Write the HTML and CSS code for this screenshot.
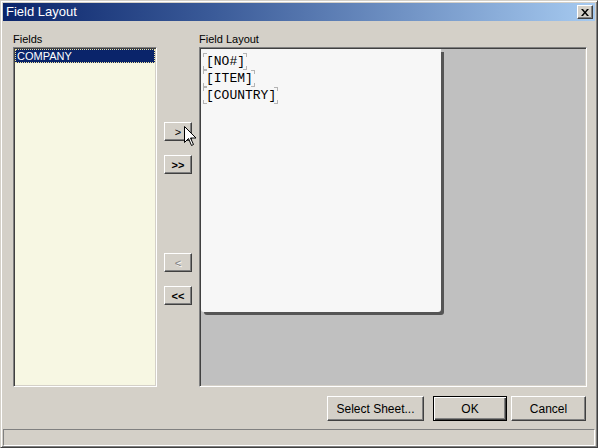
FILE: index.html
```html
<!DOCTYPE html>
<html>
<head>
<meta charset="utf-8">
<title>Field Layout</title>
<link rel="stylesheet" href="styles.css">
</head>
<body>
<div class="window">
  <div class="titlebar">
    <span class="title">Field Layout</span>
    <button class="close" aria-label="Close">
      <svg width="8" height="7" viewBox="0 0 8 7"><path d="M0 0h2l2 2.5L6 0h2L5 3.5 8 7H6L4 4.5 2 7H0l3-3.5z" fill="#000"/></svg>
    </button>
  </div>
  <div class="main">
    <div class="fields-col">
      <div class="label">Fields</div>
      <div class="listbox">
        <div class="item selected">COMPANY</div>
      </div>
    </div>
    <div class="movers">
      <button class="btn mover first">&gt;</button>
      <button class="btn mover">&gt;&gt;</button>
      <button class="btn mover gap" disabled>&lt;</button>
      <button class="btn mover">&lt;&lt;</button>
    </div>
    <div class="layout-col">
      <div class="label">Field Layout</div>
      <div class="canvas">
        <div class="card">
          <span class="field">[NO#]</span>
          <span class="field">[ITEM]</span>
          <span class="field">[COUNTRY]</span>
        </div>
      </div>
    </div>
  </div>
  <div class="actions">
    <button class="btn action select">Select Sheet...</button>
    <button class="btn action ok">OK</button>
    <button class="btn action cancel">Cancel</button>
  </div>
  <div class="status"></div>
  <svg class="cursor" width="13" height="21" viewBox="0 0 13 21">
    <path d="M0.5 0.5v16l4-4 3 7 2-1-3-6.5h5.5z" fill="#fff" stroke="#000" stroke-width="1" stroke-linejoin="miter"/>
  </svg>
</div>
</body>
</html>
```

FILE: styles.css
```css
* { box-sizing: border-box; }

html, body {
  margin: 0;
  padding: 0;
  background: #d4d0c8;
}

body {
  font-family: "Liberation Sans", Arial, sans-serif;
  font-size: 11px;
  color: #000;
}

.window {
  position: relative;
  width: 598px;
  height: 448px;
  background: #d4d0c8;
  border: 1px solid;
  border-color: #d4d0c8 #404040 #404040 #d4d0c8;
  box-shadow: inset 1px 1px 0 #fff, inset -1px -1px 0 #808080;
  padding: 2px 2px 1px 2px;
  display: flex;
  flex-direction: column;
}

.titlebar {
  height: 18px;
  flex: none;
  display: flex;
  align-items: center;
  justify-content: space-between;
  padding: 0 2px 0 3px;
  background: linear-gradient(to right, #0a246a 0%, #3a5a98 35%, #a6caf0 100%);
}

.title {
  color: #fff;
  font-size: 13px;
  line-height: 18px;
}

.close {
  width: 16px;
  height: 14px;
  padding: 0;
  margin: 0;
  display: flex;
  align-items: center;
  justify-content: center;
  background: #d4d0c8;
  border: 1px solid;
  border-color: #fff #404040 #404040 #fff;
  box-shadow: inset -1px -1px 0 #808080;
}

.main {
  display: flex;
  padding: 11px 0 0 10px;
  flex: none;
}

.label {
  height: 15px;
  line-height: 15px;
  font-size: 11px;
}

.fields-col {
  width: 144px;
  flex: none;
}

.listbox {
  height: 340px;
  background: #f7f7e3;
  border: 1px solid;
  border-color: #808080 #fff #fff #808080;
  box-shadow: inset 1px 1px 0 #404040, inset -1px -1px 0 #d4d0c8;
  padding: 1px;
}

.item {
  height: 14px;
  line-height: 12px;
  padding-left: 1px;
  white-space: nowrap;
}

.item.selected {
  background: #0a246a;
  color: #fff;
  border: 1px dotted #f2e6a0;
}

.movers {
  width: 28px;
  flex: none;
  margin: 0 7px;
  display: flex;
  flex-direction: column;
  padding-top: 90px;
}

.btn {
  font-family: "Liberation Sans", Arial, sans-serif;
  font-size: 11px;
  color: #000;
  background: #d4d0c8;
  border: 1px solid;
  border-color: #fff #404040 #404040 #fff;
  box-shadow: inset -1px -1px 0 #808080;
  padding: 0;
  margin: 0;
}

.mover {
  width: 28px;
  height: 19px;
  margin-top: 14px;
  font-weight: bold;
  font-size: 11px;
  line-height: 16px;
  padding-top: 1px;
}

.mover.first { margin-top: 0; font-weight: normal; }
.mover.gap { margin-top: 79px; }

.mover:disabled {
  color: #808080;
  text-shadow: 1px 1px 0 #fff;
  font-weight: normal;
}

.layout-col {
  width: 388px;
  flex: none;
}

.canvas {
  height: 340px;
  background: #c0c0c0;
  border: 1px solid;
  border-color: #808080 #fff #fff #808080;
  box-shadow: inset 1px 1px 0 #404040, inset -1px -1px 0 #d4d0c8;
  padding: 1px;
}

.card {
  width: 240px;
  height: 263px;
  background: #f7f7f7;
  border-radius: 0 0 3px 3px;
  box-shadow: 3px 3px 0 #555;
  padding: 4px 0 0 2px;
  display: flex;
  flex-direction: column;
  align-items: flex-start;
  font-family: "Liberation Mono", "Courier New", monospace;
  font-size: 13px;
}

.field {
  display: block;
  height: 17px;
  line-height: 17px;
  padding: 0 2px 0 3px;
  --c: #b4b4b4;
  background:
    linear-gradient(var(--c), var(--c)) left top / 4px 1px no-repeat,
    linear-gradient(var(--c), var(--c)) left top / 1px 4px no-repeat,
    linear-gradient(var(--c), var(--c)) right top / 4px 1px no-repeat,
    linear-gradient(var(--c), var(--c)) right top / 1px 4px no-repeat,
    linear-gradient(var(--c), var(--c)) left bottom / 4px 1px no-repeat,
    linear-gradient(var(--c), var(--c)) left bottom / 1px 4px no-repeat,
    linear-gradient(var(--c), var(--c)) right bottom / 4px 1px no-repeat,
    linear-gradient(var(--c), var(--c)) right bottom / 1px 4px no-repeat;
}

.actions {
  display: flex;
  justify-content: flex-end;
  padding: 0 9px 0 0;
  margin-top: 9px;
  flex: none;
}

.action {
  height: 25px;
  font-size: 12px;
}

.select { width: 97px; margin-right: 9px; }
.ok {
  width: 74px;
  margin-right: 4px;
  border: 1px solid #000;
  box-shadow: inset 1px 1px 0 #fff, inset -1px -1px 0 #404040, inset -2px -2px 0 #808080;
}
.cancel { width: 75px; }

.status {
  margin-top: 8px;
  height: 17px;
  flex: none;
  border: 1px solid;
  border-color: #808080 #fff #fff #808080;
}

.cursor {
  position: absolute;
  left: 183px;
  top: 125px;
}
```
